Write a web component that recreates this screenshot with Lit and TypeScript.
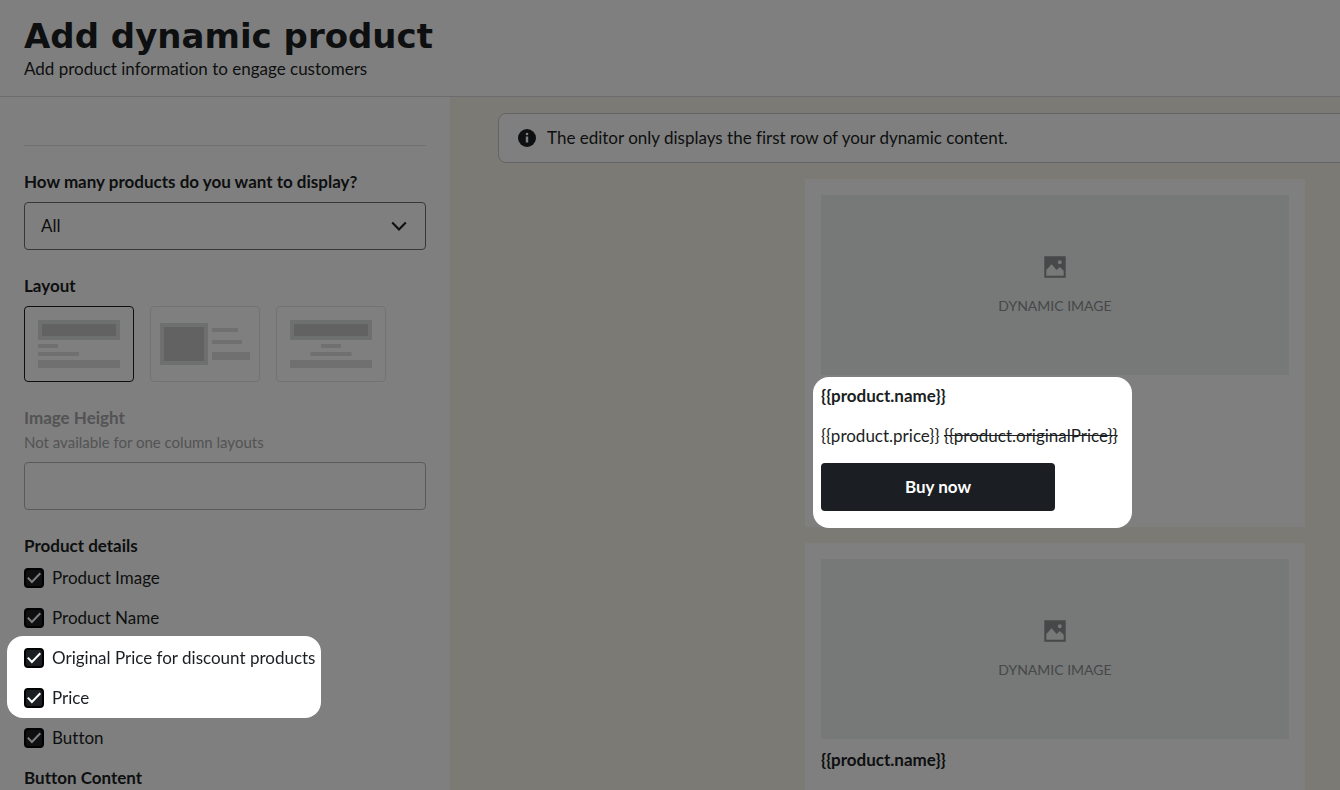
import { LitElement, html, svg, css } from "lit";
import { customElement, state } from "lit/decorators.js";
import { classMap } from "lit/directives/class-map.js";

type LayoutId = "stacked" | "side" | "centered";

interface LayoutOption {
  id: LayoutId;
  label: string;
  art: unknown;
}

const layouts: LayoutOption[] = [
  {
    id: "stacked",
    label: "Image on top, text on the left",
    art: svg`
      <rect class="frame" x="14" y="14" width="82" height="20" />
      <rect class="photo" x="18" y="18" width="74" height="12" />
      <rect class="line" x="14" y="38" width="20" height="4" />
      <rect class="line" x="14" y="46" width="41" height="4" />
      <rect class="line" x="14" y="54" width="82" height="8" />`,
  },
  {
    id: "side",
    label: "Image beside text",
    art: svg`
      <rect class="frame" x="10" y="17" width="48" height="42" />
      <rect class="photo" x="14" y="21" width="40" height="34" />
      <rect class="line" x="62" y="22" width="26" height="4" />
      <rect class="line" x="62" y="34" width="30" height="4" />
      <rect class="line" x="62" y="46" width="38" height="8" />`,
  },
  {
    id: "centered",
    label: "Image on top, centered text",
    art: svg`
      <rect class="frame" x="14" y="14" width="82" height="20" />
      <rect class="photo" x="18" y="18" width="74" height="12" />
      <rect class="line" x="45" y="38" width="20" height="4" />
      <rect class="line" x="34.5" y="46" width="41" height="4" />
      <rect class="line" x="14" y="54" width="82" height="8" />`,
  },
];

@customElement("app-root")
export class AppRoot extends LitElement {
  @state() private layout: LayoutId = "stacked";

  static styles = css`
    :host {
      display: block;
      --ink: #1b1e23;
      --muted: #8d9093;
      font: 400 17px/24px Lato, "Open Sans", sans-serif;
      font-variant-ligatures: none;
      color: var(--ink);
    }
    *,
    *::before {
      box-sizing: border-box;
    }
    svg {
      display: block;
      flex: none;
    }
    .page {
      display: flex;
      flex-direction: column;
      height: 100vh;
      overflow: hidden;
      background: #fff;
    }
    .header {
      flex: none;
      padding: 15px 24px;
      border-bottom: 1px solid #d8d9dc;
    }
    .title {
      margin: 0;
      font: 700 34px/42px "DejaVu Sans", sans-serif;
    }
    .subtitle {
      margin: 0;
    }
    .body {
      display: flex;
      flex: 1;
      min-height: 0;
    }
    .sidebar {
      flex: none;
      display: flex;
      flex-direction: column;
      gap: 24px;
      width: 450px;
      padding: 48px 24px 0;
    }
    .rule {
      width: 100%;
      margin: 0;
      border: 0;
      border-top: 1px solid #dfe0e2;
    }
    .field {
      display: flex;
      flex-direction: column;
      gap: 8px;
      min-width: 0;
    }
    .label {
      display: block;
      font-weight: 700;
    }
    .disabled {
      color: #a6a7a9;
    }
    .hint {
      display: block;
      font-size: 15px;
    }
    .select {
      display: grid;
      align-items: center;
    }
    .select > * {
      grid-area: 1 / 1;
    }
    .select svg {
      justify-self: end;
      margin-right: 16px;
      pointer-events: none;
    }
    .control {
      appearance: none;
      width: 100%;
      height: 48px;
      margin: 0;
      padding: 0 16px;
      border: 1px solid #6d6f73;
      border-radius: 4px;
      background: #fff;
      color: inherit;
      font: inherit;
    }
    .control:disabled {
      border-color: #b4b5b8;
    }
    .layouts {
      display: flex;
      gap: 16px;
    }
    .tile {
      width: 110px;
      height: 76px;
      padding: 0;
      border: 1px solid #e4e5e7;
      border-radius: 4px;
      background: #fff;
      overflow: hidden;
    }
    .tile svg {
      margin: -1px;
    }
    .tile.selected {
      border-color: var(--ink);
    }
    .frame {
      fill: #dcdfde;
    }
    .photo {
      fill: #c5c5c5;
    }
    .line {
      fill: #e0e0e0;
    }
    .checks {
      display: flex;
      flex-direction: column;
      gap: 16px;
    }
    .check {
      display: flex;
      align-items: center;
      gap: 8px;
      white-space: nowrap;
    }
    .box {
      display: grid;
      flex: none;
    }
    .box > * {
      grid-area: 1 / 1;
    }
    .box input {
      appearance: none;
      width: 20px;
      height: 20px;
      margin: 0;
      border: 2px solid #000;
      border-radius: 4px;
      background: #fff;
    }
    .box input:checked {
      background: var(--ink);
    }
    .box svg {
      pointer-events: none;
    }
    .section {
      margin: 0;
      font: inherit;
      font-weight: 700;
    }
    .details {
      display: flex;
      flex-direction: column;
      gap: 16px;
    }
    .canvas {
      flex: 1;
      min-width: 0;
      overflow: hidden;
      padding: 16px 48px;
      background: #f9f5eb;
    }
    .sheet {
      display: flex;
      flex-direction: column;
      align-items: center;
      gap: 16px;
      min-width: 1114px;
    }
    .notice {
      display: flex;
      align-items: center;
      gap: 8px;
      width: 100%;
      padding: 12px 16px;
      border: 1px solid #c6c7ca;
      border-radius: 8px;
      background: #fff;
    }
    .card {
      width: 500px;
      padding: 16px;
      background: #fff;
    }
    .picture {
      display: flex;
      flex-direction: column;
      align-items: center;
      justify-content: center;
      gap: 16px;
      height: 180px;
      padding-top: 4px;
      background: #ecf2ef;
      color: var(--muted);
      font-size: 14px;
    }
    .product {
      display: flex;
      flex-direction: column;
      align-items: flex-start;
      gap: 15px;
      width: fit-content;
      min-width: 319px;
      margin: 2px 0 -17px -8px;
      padding: 6px 8px 17px;
    }
    .name,
    .price {
      margin: 0;
      font-size: 17px;
    }
    .name {
      line-height: 26px;
    }
    .buy {
      width: 234px;
      height: 48px;
      border: 0;
      border-radius: 4px;
      background: var(--ink);
      color: #fff;
      font: inherit;
      font-weight: 700;
    }
    .dim {
      position: fixed;
      inset: 0;
      z-index: 1;
      background: rgba(0, 0, 0, 0.5);
      pointer-events: none;
    }
    .spotlight {
      position: relative;
      z-index: 2;
      border-radius: 16px;
      background: #fff;
    }
    .checks .spotlight {
      width: 314px;
      margin: -10px 0 -8px -17px;
      padding: 10px 0 8px 17px;
    }
  `;

  private check(label: string) {
    return html`<label class="check">
      <span class="box">
        <input type="checkbox" checked />
        <svg width="20" height="20" viewBox="0 0 20 20" fill="none" stroke="#fff" stroke-width="2" aria-hidden="true">
          <path d="M3.8 9.6 7.9 14 16.3 5.2" />
        </svg>
      </span>
      ${label}
    </label>`;
  }

  private card(highlighted: boolean) {
    return html`<article class="card">
      <div class="picture">
        <svg width="22" height="22" viewBox="0 0 22 22" aria-hidden="true">
          <path
            fill="currentColor"
            fill-rule="evenodd"
            d="M.3.3h21.4v21.4H.3zM2.3 19.7h17.4v-4.9l-3.9-3.9-3.2 3.2-5-5.8-5.3 5.6zM15.8 4.3a2 2 0 1 0 0 4 2 2 0 0 0 0-4z"
          />
        </svg>
        <span>DYNAMIC IMAGE</span>
      </div>
      <div class=${classMap({ product: true, spotlight: highlighted })}>
        <h3 class="name">{{product.name}}</h3>
        <p class="price">{{product.price}} <s>{{product.originalPrice}}</s></p>
        <button class="buy" type="button">Buy now</button>
      </div>
    </article>`;
  }

  render() {
    return html`
      <div class="page">
        <header class="header">
          <h1 class="title">Add dynamic product</h1>
          <p class="subtitle">Add product information to engage customers</p>
        </header>
        <div class="body">
          <aside class="sidebar">
            <hr class="rule" />
            <div class="field">
              <label class="label" for="count">How many products do you want to display?</label>
              <div class="select">
                <select class="control" id="count">
                  <option>All</option>
                </select>
                <svg width="22" height="22" viewBox="0 0 22 22" fill="none" stroke="currentColor" stroke-width="2.1" aria-hidden="true">
                  <path d="M4.2 7.6 11 14.4 17.8 7.6" />
                </svg>
              </div>
            </div>
            <div class="field">
              <span class="label" id="layout">Layout</span>
              <div class="layouts" role="group" aria-labelledby="layout">
                ${layouts.map(
                  (option) => html`<button
                    type="button"
                    class=${classMap({ tile: true, selected: option.id === this.layout })}
                    aria-pressed=${option.id === this.layout}
                    aria-label=${option.label}
                    @click=${() => (this.layout = option.id)}
                  >
                    <svg width="110" height="76" viewBox="0 0 110 76" aria-hidden="true">${option.art}</svg>
                  </button>`
                )}
              </div>
            </div>
            <div class="field">
              <label class="disabled" for="height">
                <span class="label">Image Height</span>
                <span class="hint">Not available for one column layouts</span>
              </label>
              <input class="control" id="height" type="text" disabled />
            </div>
            <div class="details">
              <div class="field" role="group" aria-labelledby="details">
                <span class="label" id="details">Product details</span>
                <div class="checks">
                  ${this.check("Product Image")} ${this.check("Product Name")}
                  <div class="checks spotlight">
                    ${this.check("Original Price for discount products")} ${this.check("Price")}
                  </div>
                  ${this.check("Button")}
                </div>
              </div>
              <h2 class="section">Button Content</h2>
            </div>
          </aside>
          <main class="canvas">
            <div class="sheet">
              <div class="notice" role="note">
                <svg width="24" height="24" viewBox="0 0 24 24" aria-hidden="true">
                  <circle cx="12" cy="12" r="9" fill="currentColor" />
                  <circle cx="12" cy="8" r="1.3" fill="#fff" />
                  <path d="M10.8 10.6h2.4v6h-2.4z" fill="#fff" />
                </svg>
                <span>The editor only displays the first row of your dynamic content.</span>
              </div>
              ${this.card(true)} ${this.card(false)}
            </div>
          </main>
        </div>
      </div>
      <div class="dim"></div>
    `;
  }
}
